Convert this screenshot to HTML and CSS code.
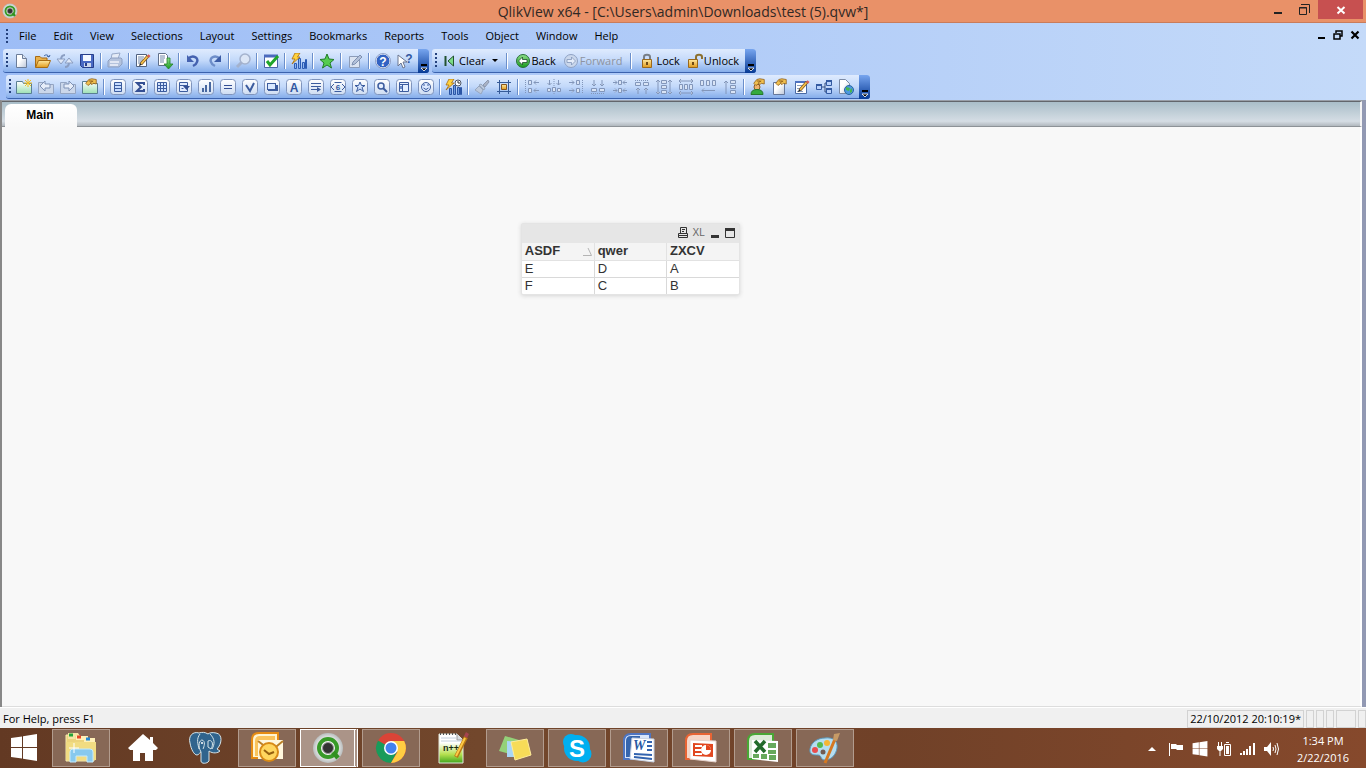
FILE: index.html
```html
<!DOCTYPE html>
<html lang="en">
<head>
<meta charset="utf-8">
<title>QlikView x64 - [C:\Users\admin\Downloads\test (5).qvw*]</title>
<link rel="stylesheet" href="styles.css">
</head>
<body>
<svg class="defs" aria-hidden="true">
  <defs>
    <linearGradient id="gFrame" x1="0" y1="0" x2="0" y2="1"><stop offset="0" stop-color="#fff"/><stop offset="1" stop-color="#cddcf2"/></linearGradient>
    <linearGradient id="gPage" x1="0" y1="0" x2="1" y2="1"><stop offset="0.4" stop-color="#fff"/><stop offset="1" stop-color="#bcc6d8"/></linearGradient>
    <linearGradient id="gGold" x1="0" y1="0" x2="0" y2="1"><stop offset="0" stop-color="#ffe9a0"/><stop offset="1" stop-color="#e09a1c"/></linearGradient>
    <linearGradient id="gGreen" x1="0" y1="0" x2="0" y2="1"><stop offset="0" stop-color="#8fe08a"/><stop offset="1" stop-color="#189a1c"/></linearGradient>
    <linearGradient id="gMint" x1="0" y1="0" x2="0" y2="1"><stop offset="0" stop-color="#fff"/><stop offset="1" stop-color="#9ce0b4"/></linearGradient>
    <linearGradient id="gNote" x1="0" y1="0" x2="0" y2="1"><stop offset="0.3" stop-color="#fff"/><stop offset="0.7" stop-color="#b6e050"/><stop offset="1" stop-color="#3fa51c"/></linearGradient>
    <radialGradient id="gSilver"><stop offset="0.5" stop-color="#fff"/><stop offset="1" stop-color="#b9bdbd"/></radialGradient>
    <symbol id="frame" viewBox="0 0 16 16"><rect x=".5" y=".5" width="15" height="15" rx="3" fill="url(#gFrame)" stroke="#7f94bd"/></symbol>
    <symbol id="hand" viewBox="0 0 16 16"><path d="M1 7 5 2l4-1 6 1v6l-4-1-2 2-1-2-4 3z" fill="#f0c050" stroke="#8b5a14"/><path d="M5 4h5M7 6l4-2" stroke="#7a4a10"/></symbol>
    <symbol id="pencil" viewBox="0 0 16 16"><path d="M6 11 13 3" stroke="#7b541c" stroke-width="3.200"/><path d="M6 11 12.500 3.500" stroke="#f6c14b" stroke-width="1.800"/><path d="m12 3 1.500-1.700 2 1.800-1.500 1.700z" fill="#d95c53"/><path d="m4 13 1-3 2 1.800z" fill="#222"/></symbol>
    <symbol id="bolt" viewBox="0 0 16 16"><path d="M4 0h5L6.500 4H9L1 11l3-5H1z" fill="#ffd23c" stroke="#a96d10" stroke-width=".8"/></symbol>
    <symbol id="qlik" viewBox="0 0 32 32"><circle cx="16" cy="16" r="15" fill="url(#gSilver)"/><circle cx="16" cy="16" r="9" fill="#f7f7f7" stroke="#389a28" stroke-width="4"/><path d="m21 20 5 6" stroke="#31901f" stroke-width="4.500"/><circle cx="16" cy="16" r="5.500" fill="#333" stroke="#999"/></symbol>
    <symbol id="win" viewBox="0 0 28 28"><path d="m1 4 11-1.600V13H1zm12-1.800L27 0v13H13zM1 14h11v10.600L1 23zm12 0h14v13l-14-2.200z" fill="#fff"/></symbol>
  </defs>
</svg>
<div class="window">
  <header class="titlebar">
    <svg class="app-icon" viewBox="0 0 32 32" aria-hidden="true"><use href="#qlik"/></svg>
    <h1 class="title">QlikView x64 - [C:\Users\admin\Downloads\test (5).qvw*]</h1>
    <div class="window-controls">
      <button class="wbtn" aria-label="Minimize"><svg viewBox="0 0 12 12"><path d="M2 9h8" stroke="#222" stroke-width="2"/></svg></button>
      <button class="wbtn" aria-label="Restore"><svg viewBox="0 0 12 12"><path d="M3 .5h8.500V9M1.500 3.500h7v7h-7zM1 4h8" fill="none" stroke="#222"/></svg></button>
      <button class="wbtn close" aria-label="Close"><svg viewBox="0 0 12 12"><path d="m2.500 3 7 6.500m0-6.500-7 6.500" stroke="#fff" stroke-width="2"/></svg></button>
    </div>
  </header>
  <div class="command-area">
    <nav class="menubar" aria-label="Main menu">
      <span class="grip"></span>
      <button>File</button><button>Edit</button><button>View</button><button>Selections</button><button>Layout</button><button>Settings</button><button>Bookmarks</button><button>Reports</button><button>Tools</button><button>Object</button><button>Window</button><button>Help</button>
      <div class="doc-controls">
        <button aria-label="Minimize document"><svg viewBox="0 0 10 10"><path d="M2 8h7" stroke="#000" stroke-width="2"/></svg></button>
        <button aria-label="Restore document"><svg viewBox="0 0 10 10"><path d="M3 3V1h6v5H7M1 4h6v5H1z" fill="none" stroke="#000" stroke-width="1.500"/></svg></button>
        <button aria-label="Close document"><svg viewBox="0 0 10 10"><path d="m1.500 1.500 7 7m0-7-7 7" stroke="#000" stroke-width="2.200"/></svg></button>
      </div>
    </nav>
    <div class="toolbar-row">
      <div class="toolbar" role="toolbar" aria-label="Standard">
        <span class="grip"></span>
        <button aria-label="New"><svg viewBox="0 0 16 16"><path d="M3.500 1.500h6l4 4v9h-10z" fill="url(#gPage)" stroke="#6c7d99"/><path d="M9.500 1.500v4h4" fill="#dde5f1" stroke="#6c7d99"/></svg></button>
        <button aria-label="Open"><svg viewBox="0 0 16 16"><path d="M.5 14V3.500H5L6.500 5H12v3" fill="#e8b04a" stroke="#a76b13"/><path d="m.5 14.500 3-7h12l-3 7z" fill="url(#gGold)" stroke="#a76b13"/><path d="M9 3c2-2 4-1 5 1l1-2m-1 2-2-1" fill="none" stroke="#365f9f"/></svg></button>
        <button aria-label="Reload" disabled><svg viewBox="0 0 16 16"><path d="M8 2C4 2 4 5 4 7m4 7c4 0 4-3 4-5" fill="none" stroke="#8b9ec2" stroke-width="2"/><path d="M0 6h8l-4 5zM16 10H8l4-5z" fill="#dfe8f7" stroke="#8b9ec2"/></svg></button>
        <button aria-label="Save"><svg viewBox="0 0 16 16"><path d="M1.500 1.500h13v13h-11l-2-2z" fill="#4969c3" stroke="#263d89"/><path d="M4 2h8v6H4z" fill="#f4f8ff"/><path d="M5 10h7v4H5z" fill="#ccd6eb"/><path d="M6 10h2v3H6z" fill="#263d89"/></svg></button>
        <span class="sep"></span>
        <button aria-label="Print" disabled><svg viewBox="0 0 16 16"><path d="m5 1 8-1-2 6H4z" fill="#e5ecf7" stroke="#98a9c8"/><path d="M1 8 4 5h10l1 1v5l-3 3H1z" fill="#b4c3dd" stroke="#8ea0c2"/><path d="M3 9h9M3 12h8" stroke="#f0f4fc" stroke-width="1.500"/></svg></button>
        <span class="sep"></span>
        <button aria-label="Edit script"><svg viewBox="0 0 16 16"><path d="M1.500 1.500h10v12h-10z" fill="#fff" stroke="#50617f"/><path d="M3 4h6M3 6h5M3 8h4M3 10h3" stroke="#7087a9"/><use href="#pencil"/></svg></button>
        <button aria-label="Reload script"><svg viewBox="0 0 16 16"><path d="M1.500.5h7l2 2v10h-9z" fill="#fff" stroke="#60708b"/><path d="M3 3h5M3 5h5M3 7h4M3 9h4" stroke="#7087a9"/><path d="M10 5h3v6h3l-4.500 5L7 11h3z" fill="url(#gGreen)" stroke="#23802a" stroke-width=".8"/></svg></button>
        <span class="sep"></span>
        <button aria-label="Undo"><svg viewBox="0 0 16 16"><path d="M3 6c5-5 11-1 9 3-.5 2-2 3-4 4" fill="none" stroke="#4562b0" stroke-width="2.500"/><path d="M2 2v7h7z" fill="#4562b0"/></svg></button>
        <button aria-label="Redo"><svg viewBox="0 0 16 16"><path d="M13 6C8 1 2 5 4 9c.5 2 2 3 4 4" fill="none" stroke="#6e8ec9" stroke-width="2.500"/><path d="M14 2v7H7z" fill="#3c5ca6"/></svg></button>
        <span class="sep"></span>
        <button aria-label="Search" disabled><svg viewBox="0 0 16 16"><path d="m7 9-5 5" stroke="#a4b2cd" stroke-width="3"/><circle cx="10" cy="6" r="5" fill="#dce6f6" stroke="#a4b2cd" stroke-width="1.500"/></svg></button>
        <span class="sep"></span>
        <button aria-label="Current selections"><svg viewBox="0 0 16 16"><path d="M1.500 2.500h13v12h-13z" fill="#fff" stroke="#4864a5"/><path d="M1 3h14" stroke="#4b6abe" stroke-width="3"/><path d="m4 8 3 4 8-9" fill="none" stroke="#20a52a" stroke-width="3"/></svg></button>
        <span class="sep"></span>
        <button aria-label="Quick chart wizard"><svg viewBox="0 0 16 16"><path d="M3.500 10.500h2v5h-2zm4-5h2v10h-2zm4 4h2v6h-2zm3-3h1v9h-1z" fill="#8eb6f0" stroke="#2b5bb5"/><use href="#bolt"/></svg></button>
        <span class="sep"></span>
        <button aria-label="Add bookmark"><svg viewBox="0 0 16 16"><path d="m8 1 2 5 5 .5-4 3.500 1.500 5L8 12l-4.500 3L5 10 1 6.500 6 6z" fill="#55cc50" stroke="#217d27"/></svg></button>
        <span class="sep"></span>
        <button aria-label="Edit notes" disabled><svg viewBox="0 0 16 16"><path d="M2.500 3.500h10v11h-10z" fill="#dae3f1" stroke="#8c9cb8"/><path d="m5 12 1-3 7-7 2 2-7 7z" fill="#b3c1d9" stroke="#7f91b2"/></svg></button>
        <span class="sep"></span>
        <button aria-label="Help topics"><svg viewBox="0 0 16 16"><circle cx="8" cy="8" r="7" fill="#3262c3" stroke="#fff"/><circle cx="8" cy="8" r="7.500" fill="none" stroke="#7184b0" stroke-width=".7"/><text x="8" y="12.500" text-anchor="middle" class="glyph white">?</text></svg></button>
        <button aria-label="Context help"><svg viewBox="0 0 16 16"><path d="M1 2v11l3-3 2 5 2-1-2-5h4z" fill="#fff" stroke="#6b7690"/><text x="12" y="10" text-anchor="middle" class="glyph blue">?</text></svg></button>
        <button class="cap" aria-label="Standard toolbar options"><svg viewBox="0 0 8 8"><path d="M1 1h6" stroke="#000" stroke-width="2"/><path d="M1 4h6L4 7z" fill="#000" stroke="#fff" stroke-width=".8"/></svg></button>
      </div>
      <div class="toolbar" role="toolbar" aria-label="Navigation">
        <span class="grip"></span>
        <button class="labeled"><svg viewBox="0 0 16 16"><path d="M3.500 3v10" stroke="#235230" stroke-width="2"/><path d="M11.500 3v10L6 8z" fill="#7bdc85" stroke="#235230"/></svg>Clear<span class="drop"></span></button>
        <span class="sep wide"></span>
        <button class="labeled"><svg viewBox="0 0 16 16"><circle cx="8" cy="8" r="6.500" fill="url(#gGreen)" stroke="#28703a"/><path d="m3.500 8 4-4v2.500H12v3H7.500V12z" fill="#fff" stroke="#1f4c2b" stroke-width=".8"/></svg>Back</button>
        <button class="labeled" disabled><svg viewBox="0 0 16 16"><circle cx="8" cy="8" r="6.500" fill="#cad7ec" stroke="#8fa2c4"/><path d="m12.500 8-4-4v2.500H4v3h4.500V12z" fill="#e5edfa" stroke="#8195b9" stroke-width=".8"/></svg>Forward</button>
        <span class="sep wide"></span>
        <button class="labeled"><svg viewBox="0 0 16 16"><path d="M5 7V4c0-3 6-3 6 0v3" fill="none" stroke="#777e87" stroke-width="2"/><path d="M3.500 6.500h9v8h-9z" fill="url(#gGold)" stroke="#9a691c"/><path d="M8 9v3" stroke="#704b14" stroke-width="2"/></svg>Lock</button>
        <button class="labeled"><svg viewBox="0 0 16 16"><path d="M9 7V4c0-3 6-3 6 0v2" fill="none" stroke="#8c702f" stroke-width="2"/><path d="M1.500 6.500h9v8h-9z" fill="url(#gGold)" stroke="#9a691c"/><path d="M6 9v3" stroke="#704b14" stroke-width="2"/></svg>Unlock</button>
        <button class="cap" aria-label="Navigation toolbar options"><svg viewBox="0 0 8 8"><path d="M1 1h6" stroke="#000" stroke-width="2"/><path d="M1 4h6L4 7z" fill="#000" stroke="#fff" stroke-width=".8"/></svg></button>
      </div>
    </div>
    <div class="toolbar-row second">
      <div class="toolbar" role="toolbar" aria-label="Design">
        <span class="grip"></span>
        <button aria-label="Add sheet"><svg viewBox="0 0 16 16"><path d="M.5 2.500h6l1 2h8v10H.5z" fill="url(#gMint)" stroke="#597f93"/><path d="M12 0v8M8 4h8M9 1l6 6m0-6L9 7" stroke="#f1bf21"/></svg></button>
        <button aria-label="Promote sheet" disabled><svg viewBox="0 0 16 16"><path d="M.5 3.500h6l1 2h8v9H.5z" fill="#cbd7ea" stroke="#94a5c2"/><path d="m2 7 5-5v3h5v4H7v3z" fill="#e6edf9" stroke="#7f92b6"/></svg></button>
        <button aria-label="Demote sheet" disabled><svg viewBox="0 0 16 16"><path d="M.5 3.500h6l1 2h8v9H.5z" fill="#cbd7ea" stroke="#94a5c2"/><path d="M14 7 9 2v3H4v4h5v3z" fill="#e6edf9" stroke="#7f92b6"/></svg></button>
        <button aria-label="Sheet properties"><svg viewBox="0 0 16 16"><path d="M.5 2.500h6l1 2h8v10H.5z" fill="url(#gMint)" stroke="#597f93"/><use href="#hand" x="2" y="-1" width="14" height="12"/></svg></button>
        <span class="sep"></span>
        <button aria-label="List box"><svg viewBox="0 0 16 16"><use href="#frame"/><path d="M4.500 3.500h7v9h-7zm0 3h7m-7 3h7" fill="#c6dcff" stroke="#3c5c9e"/></svg></button>
        <button aria-label="Statistics box"><svg viewBox="0 0 16 16"><use href="#frame"/><path d="M12 6V4H5l4 4-4 4h7v-2" fill="none" stroke="#344f93" stroke-width="2"/></svg></button>
        <button aria-label="Table box"><svg viewBox="0 0 16 16"><use href="#frame"/><path d="M3.500 3.500h9v9h-9zm3 0v9m3-9v9m-6-6h9m-9 3h9" fill="#d2e3ff" stroke="#3c5c9e"/></svg></button>
        <button aria-label="Multi box"><svg viewBox="0 0 16 16"><use href="#frame"/><path d="M3.500 3.500h8v9h-8zm0 3h8m-6 3h2" fill="#e2ecff" stroke="#3c5c9e"/><path d="M7 7h7l-3.500 4z" fill="#344f93"/></svg></button>
        <button aria-label="Chart"><svg viewBox="0 0 16 16"><use href="#frame"/><path d="M4 9h2v4H4zm3-3h2v7H7zm4-3h2v10h-2z" fill="#47679f"/></svg></button>
        <button aria-label="Input box"><svg viewBox="0 0 16 16"><use href="#frame"/><path d="M4 6.500h8m-8 3h8" stroke="#344f93"/></svg></button>
        <button aria-label="Current selections box"><svg viewBox="0 0 16 16"><use href="#frame"/><path d="m4 6 4 6 4-8" fill="none" stroke="#3c5c9e" stroke-width="2"/></svg></button>
        <button aria-label="Button object"><svg viewBox="0 0 16 16"><use href="#frame"/><path d="M4 11h9V6" fill="none" stroke="#3c5c9e" stroke-width="2"/><rect x="3.500" y="4.500" width="8" height="6" fill="#dae9ff" stroke="#3c5c9e"/></svg></button>
        <button aria-label="Text object"><svg viewBox="0 0 16 16"><use href="#frame"/><text x="8" y="12.500" text-anchor="middle" class="glyph blue">A</text></svg></button>
        <button aria-label="Line object"><svg viewBox="0 0 16 16"><use href="#frame"/><path d="M3 4.500h10M3 7.500h10M3 10.500h6" stroke="#3c5c9e"/><path d="m9 8 4 2.500L9 13z" fill="#3c5c9e"/></svg></button>
        <button aria-label="Slider object"><svg viewBox="0 0 16 16"><use href="#frame"/><path d="M4.500 3.500h7m-7 9h7M4 5 1 8l3 3m8-6 3 3-3 3" fill="none" stroke="#3c5c9e"/><text x="8" y="11" text-anchor="middle" class="tiny blue">6</text></svg></button>
        <button aria-label="Bookmark object"><svg viewBox="0 0 16 16"><use href="#frame"/><path d="m8 3 1.500 3.500H13l-3 2 1.500 4L8 10l-3.500 2.500 1.500-4-3-2h3.500z" fill="#d5e5ff" stroke="#3c5c9e"/></svg></button>
        <button aria-label="Search object"><svg viewBox="0 0 16 16"><use href="#frame"/><circle cx="7" cy="7" r="3" fill="#e5efff" stroke="#3c5c9e" stroke-width="1.500"/><path d="m9 9 4 4" stroke="#3c5c9e" stroke-width="2"/></svg></button>
        <button aria-label="Container"><svg viewBox="0 0 16 16"><use href="#frame"/><path d="M3.500 3.500h9v9h-9zM3 5.500h10M6.500 5v8" fill="#e4efff" stroke="#3c5c9e"/><path d="M4 7h2v3H4z" fill="#6f8fcb"/></svg></button>
        <button aria-label="Custom object"><svg viewBox="0 0 16 16"><use href="#frame"/><circle cx="8" cy="8" r="4.500" fill="#dce9ff" stroke="#3c5c9e"/><path d="M5.500 9q2.500 3 5 0M6 5v2m4-2v2" fill="none" stroke="#3c5c9e"/></svg></button>
        <span class="sep"></span>
        <button aria-label="Timed chart"><svg viewBox="0 0 16 16"><path d="M3.500 9.500h2v6h-2zm4-3h2v9h-2zm4 2h2v7h-2zm3 0h1v7h-1z" fill="#6f9bdd" stroke="#2b55a5"/><use href="#bolt" x="-1"/><circle cx="12" cy="4" r="3" fill="#fff" stroke="#4f5664"/><path d="M12 2v2h2" fill="none" stroke="#333"/></svg></button>
        <span class="sep"></span>
        <button aria-label="Format painter" disabled><svg viewBox="0 0 16 16"><path d="m9 6 5-5 1 2-4 5z" fill="#aab3c5" stroke="#8c98b0"/><path d="m7 5 4 4-1 2-5-5zM5 7l4 4-2 4-6-4z" fill="#bdc9dc" stroke="#97a7c0"/></svg></button>
        <button aria-label="Design grid"><svg viewBox="0 0 16 16"><path d="M3.500 1v14M12.500 1v14M1 3.500h14M1 12.500h14" stroke="#365b98"/><path d="M5.500 5.500h5v5h-5z" fill="url(#gGold)" stroke="#8a571b"/></svg></button>
        <span class="sep"></span>
        <button class="arrange" aria-label="Align left" disabled><svg viewBox="0 0 16 16"><path d="M1.500 1v14" stroke-dasharray="1 1"/><path d="M4.500 1.500h3v4h-3zm0 8h3v4h-3zM10 3.500h5m-5 8h5M12 1.500l-2 2 2 2m0 4-2 2 2 2"/></svg></button>
        <button class="arrange" aria-label="Center horizontally" disabled><svg viewBox="0 0 16 16"><path d="M8 0v16" stroke-dasharray="1 1"/><path d="M6.500 8.500h3v4h-3zM3.500 1v5m9-5v5M1.500 4l2 2 2-2m5 0 2 2 2-2M1.500 9.500h3v3h-3zm10 0h3v3h-3z"/></svg></button>
        <button class="arrange" aria-label="Align right" disabled><svg viewBox="0 0 16 16"><path d="M14.500 1v14" stroke-dasharray="1 1"/><path d="M8.500 1.500h3v4h-3zm0 8h3v4h-3zM1 3.500h5m-5 8h5M4 1.500l2 2-2 2m0 4 2 2-2 2"/></svg></button>
        <button class="arrange" aria-label="Align bottom" disabled><svg viewBox="0 0 16 16"><path d="M1 14.500h14" stroke-dasharray="1 1"/><path d="M1.500 9.500h5v3h-5zm8 0h5v3h-5zM4 1v6m8-6v6M2 5l2 2 2-2m4 0 2 2 2-2"/></svg></button>
        <button class="arrange" aria-label="Center vertically" disabled><svg viewBox="0 0 16 16"><path d="M6.500 1.500h3v4h-3zm0 8h3v4h-3zM1 3.500h4m6 0h4M1 11.500h4m6 0h4M3 1.500l2 2-2 2m10-4-2 2 2 2M3 9.500l2 2-2 2m10-4-2 2 2 2"/></svg></button>
        <button class="arrange" aria-label="Align top" disabled><svg viewBox="0 0 16 16"><path d="M1 1.500h14" stroke-dasharray="1 1"/><path d="M1.500 3.500h5v3h-5zm8 0h5v3h-5zM4 9v6m8-6v6M2 11l2-2 2 2m4 0 2-2 2 2"/></svg></button>
        <button class="arrange" aria-label="Space vertically" disabled><svg viewBox="0 0 16 16"><path d="M5.500 1.500h5v3h-5zm0 5h5v3h-5zm0 5h5v3h-5zM2 1v14M14 1v14M0 3l2-2 2 2M0 13l2 2 2-2m8-10 2-2 2 2m-4 10 2 2 2-2"/></svg></button>
        <button class="arrange" aria-label="Space horizontally" disabled><svg viewBox="0 0 16 16"><path d="M1.500 5.500h3v5h-3zm5 0h3v5h-3zm5 0h3v5h-3zM1 2h14M1 14h14M3 0 1 2l2 2m10-4 2 2-2 2M3 12l-2 2 2 2m10-4 2 2-2 2"/></svg></button>
        <button class="arrange" aria-label="Adjust left" disabled><svg viewBox="0 0 16 16"><path d="M.5 1.500h3v5h-3zm6 0h3v5h-3zm6 0h3v5h-3zM2 11.500h13M4 9.500l-2 2 2 2"/></svg></button>
        <button class="arrange" aria-label="Adjust top" disabled><svg viewBox="0 0 16 16"><path d="M8.500 1.500h5v3h-5zm0 5h5v3h-5zm0 5h5v3h-5zM4 2v13M2 4l2-2 2 2"/></svg></button>
        <span class="sep"></span>
        <button aria-label="User preferences"><svg viewBox="0 0 16 16"><circle cx="7" cy="8" r="3" fill="#eeb36e" stroke="#8b5a23"/><path d="M1 15.500q0-5 6-5t6 5z" fill="#35aa3e" stroke="#26772d"/><use href="#hand" x="2" y="-1" width="14" height="12"/></svg></button>
        <button aria-label="Document properties"><svg viewBox="0 0 16 16"><path d="M1.500 3.500h11v12h-11z" fill="url(#gPage)" stroke="#65779a"/><use href="#hand" x="2" y="-1" width="14" height="12"/></svg></button>
        <button aria-label="Edit module"><svg viewBox="0 0 16 16"><path d="M1.500 2.500h11v12h-11z" fill="#fff" stroke="#496aa5"/><path d="M1 3h12" stroke="#4e72c1" stroke-width="2"/><path d="M3 6.500h7M3 9.500h5M3 12.500h6" stroke="#8ba0c1"/><use href="#pencil"/></svg></button>
        <button aria-label="Table viewer"><svg viewBox="0 0 16 16"><path d="M6 8h3m0 0V4h2M9 8v5h2" fill="none" stroke="#344f7f"/><path d="M.5 5.500h5v5h-5zm10-4h5v5h-5zm0 8h5v5h-5z" fill="#b7d1fb" stroke="#345ba2"/><path d="M0 6h6m4-4h6m-6 8h6" stroke="#345ba2" stroke-width="2"/></svg></button>
        <button aria-label="Web view"><svg viewBox="0 0 16 16"><path d="M1.500.5h6l4 4v10h-10z" fill="url(#gPage)" stroke="#7b8aa5"/><circle cx="11" cy="11" r="4.500" fill="#4c98e0" stroke="#28669f"/><path d="m8 8 4 1-1 3-3-1zm4 3 2-2v4l-2 1z" fill="#49b54e"/></svg></button>
        <button class="cap" aria-label="Design toolbar options"><svg viewBox="0 0 8 8"><path d="M1 1h6" stroke="#000" stroke-width="2"/><path d="M1 4h6L4 7z" fill="#000" stroke="#fff" stroke-width=".8"/></svg></button>
      </div>
    </div>
  </div>
  <main class="document">
    <div class="tabs" role="tablist"><button class="tab" role="tab" aria-selected="true">Main</button></div>
    <div class="sheet">
      <section class="table-box" aria-label="Table box">
        <div class="caption">
          <button aria-label="Print table"><svg viewBox="0 0 10 11"><path d="M2.500 6.500v-6h6v6M.5 6.500h9v4h-9zM4 2.500h3M4 4.500h2M1 8.500h8" fill="none" stroke="#333"/></svg></button>
          <button class="xl" aria-label="Send to Excel">XL</button>
          <button aria-label="Minimize table"><svg viewBox="0 0 10 11"><path d="M1 9.500h8" stroke="#333" stroke-width="3"/></svg></button>
          <button aria-label="Maximize table"><svg viewBox="0 0 10 11"><path d="M.5 1.500h9v9h-9z" fill="none" stroke="#333"/><path d="M0 2.500h10" stroke="#333" stroke-width="3"/></svg></button>
        </div>
        <table>
          <thead><tr><th scope="col" aria-sort="ascending"><span class="sorted">ASDF<svg viewBox="0 0 9 9" aria-hidden="true"><path d="M0 8.500h8.500L5 1" fill="none" stroke="#b4b4b4"/></svg></span></th><th scope="col">qwer</th><th scope="col">ZXCV</th></tr></thead>
          <tbody><tr><td>E</td><td>D</td><td>A</td></tr><tr><td>F</td><td>C</td><td>B</td></tr></tbody>
        </table>
      </section>
    </div>
  </main>
  <footer class="statusbar"><span class="hint">For Help, press F1</span><span class="pane">22/10/2012 20:10:19*</span><i class="pane"></i><i class="pane"></i><i class="pane"></i><i class="pane broad"></i><i class="pane"></i></footer>
  <nav class="taskbar" aria-label="Taskbar">
    <button class="start" aria-label="Start"><svg viewBox="0 0 28 28"><use href="#win"/></svg></button>
    <button class="task open" aria-label="File Explorer"><svg viewBox="0 0 32 32"><path d="M1 3h10v4h18v22H1z" fill="#ecd37b" stroke="#f7e9ae"/><path d="M3 1h10l2 3h-5v3H3z" fill="#f5e5a5"/><path d="M4 3h4" stroke="#23a33a" stroke-width="3"/><path d="M11 4h12v4H11z" fill="#fff0b7"/><path d="M12 5h4" stroke="#e54727" stroke-width="3"/><path d="M19 6h11v4H19z" fill="#fff0b7"/><path d="M21 7h4" stroke="#278ad0" stroke-width="3"/><path d="M1 10h30v18H1z" fill="#f1dc82"/><path d="M5 30V20q0-3 3-3h17q3 0 3 3v10h-6v-6H11v6z" fill="#87c9ee" stroke="#c4eafd"/><path d="M9 11v10m-5-5h10" stroke="#fff"/></svg></button>
    <button class="task" aria-label="Home"><svg viewBox="0 0 32 32"><path d="M16 2 1 16l2 2h3v11h7v-8h5v8h8V18h3l2-2-5-5V5h-3v3z" fill="#fff"/></svg></button>
    <button class="task" aria-label="PostgreSQL"><svg viewBox="0 0 32 32"><path d="M10 1C4-1-1 4 1 11c1 6 4 12 7 12 2 0 3-3 4-3v9c0 3 6 3 8 0V19c4 3 9 2 11 0l-3-2c5-5 6-15-1-16-4-1-7 0-8 1-3-2-6-2-9-1z" fill="#30648d" stroke="#d6e4e8"/><path d="M11 2c-4 5-2 10-1 15m11-15c5 5 5 10 2 15M12 20c-4-7-1-12 1-12 4 1 2 7 1 9m5-8c4-2 6 3 3 8l-3-2z" fill="none" stroke="#d6e4e8"/><circle cx="13" cy="11" r="1" fill="#fff"/></svg></button>
    <button class="task open" aria-label="Outlook"><svg viewBox="0 0 32 32"><path d="M1 26V8q0-7 7-7h19v25z" fill="#fff4d1" stroke="#e68b12" stroke-width="2"/><path d="M4 24V9q0-5 5-5h15v5H10v15z" fill="#fbc45c"/><path d="M7 8h25v19H7z" fill="#fff7dd"/><path d="m7 9 13 10L32 9" fill="none" stroke="#bc8128" stroke-width="2"/><circle cx="18" cy="20" r="9" fill="#ffd65e" stroke="#d88a16" stroke-width="2"/><path d="m13 18 5 4 5-2" fill="none" stroke="#95600f" stroke-width="2"/></svg></button>
    <button class="task open active" aria-label="QlikView"><svg viewBox="0 0 32 32"><use href="#qlik"/></svg></button>
    <button class="task open" aria-label="Chrome"><svg viewBox="0 0 32 32"><circle cx="16" cy="16" r="15" fill="#db4437"/><path d="M16 16 3 8.500A15 15 0 0 0 16 31l6.500-12z" fill="#189b5b"/><path d="M16 9h13.200A15 15 0 0 1 16 31l6.500-11z" fill="#ffcd42"/><circle cx="16" cy="16" r="7" fill="#fff"/><circle cx="16" cy="16" r="5.500" fill="#4381ed"/></svg></button>
    <button class="task" aria-label="Notepad++"><svg viewBox="0 0 32 32"><path d="M2 2h18l6 6v23H2z" fill="url(#gNote)" stroke="#e3e8dc"/><path d="M20 2v6h6" fill="#d8dce0" stroke="#999"/><path d="M4 6h15M4 9h20" stroke="#c4d0dc"/><path d="M3 2h17" stroke="#555" stroke-width="2" stroke-dasharray="1 2"/><text x="6" y="19" class="npp">n++</text><path d="M19 25 29 5" stroke="#b97916" stroke-width="4"/><path d="M19 24 28 6" stroke="#ffca45" stroke-width="2"/><path d="m27 4 2-4 3 2-2 4z" fill="#a5444d"/></svg></button>
    <button class="task open" aria-label="Sticky Notes"><svg viewBox="0 0 32 32"><path d="m6 4 14 4-5 15L0 19z" fill="#94d179"/><path d="m8 9 14 1v15H8z" fill="#a9d6f6"/><path d="m12 10 16-3 4 16-16 5z" fill="#f7dc58" stroke="#ffec9b"/></svg></button>
    <button class="task open" aria-label="Skype"><svg viewBox="0 0 32 32"><circle cx="16" cy="16" r="13" fill="#00aff0"/><circle cx="10" cy="10" r="8" fill="#00aff0"/><circle cx="22" cy="22" r="8.500" fill="#00aff0"/><text x="16" y="24.500" text-anchor="middle" class="skype">S</text></svg></button>
    <button class="task open" aria-label="Word"><svg viewBox="0 0 32 32"><path d="M1 27V9q0-7 7-7h19v25z" fill="#d8e5fa" stroke="#4e75c1" stroke-width="2"/><path d="M3 25V9q0-5 5-5h9v21z" fill="#3565ad"/><path d="m9 6 22 1v23L7 27z" fill="#fff" stroke="#c9d3e3"/><text x="10" y="18" class="office word">W</text><path d="M24 10h5m-5 4h5m-5 4h5M11 22l18 1m-18 2 18 2" stroke="#3263af" stroke-width="2"/></svg></button>
    <button class="task open" aria-label="PowerPoint"><svg viewBox="0 0 32 32"><path d="M1 27V9q0-7 7-7h18v25z" fill="#f6d5c7" stroke="#e86434" stroke-width="2"/><path d="m5 8 26 1v21L5 27z" fill="#fff" stroke="#e6d2cb"/><path d="m8 11 20 1v13L8 24z" fill="#e14720"/><path d="M10 14h7m-7 4h6m-6 4h7" stroke="#fff" stroke-width="2"/><circle cx="21" cy="18" r="5" fill="#fff"/><path d="M21 18v-5a5 5 0 0 1 5 5z" fill="#e14720"/></svg></button>
    <button class="task open" aria-label="Excel"><svg viewBox="0 0 32 32"><path d="M1 27V9q0-7 7-7h18v25z" fill="#dcebd8" stroke="#49a735" stroke-width="2"/><path d="m5 8 26 1v21L5 27z" fill="#fff"/><path d="M21 11h8v5h-8zm0 7h8v4h-8zM6 22h6v4H6zm8 0h6v5h-6zm8 1h7v5h-7z" fill="#67a95c"/><path d="m8 9 10 11M18 9 8 20" stroke="#236b2b" stroke-width="3.500"/></svg></button>
    <button class="task open" aria-label="Paint"><svg viewBox="0 0 32 32"><path d="M16 6c8-1 13 3 12 10-1 7-6 12-12 12-5 0-3-5-7-5S0 23 1 17C2 11 8 6 16 6z" fill="#b5def1" stroke="#5a99bd"/><circle cx="6" cy="18" r="3" fill="#e94d4d"/><circle cx="11" cy="13" r="3" fill="#55b950"/><circle cx="18" cy="11" r="3" fill="#f6b634"/><circle cx="14" cy="20" r="2.500" fill="#725c52"/><path d="M16 31 26 7" stroke="#d57821" stroke-width="3"/><path d="m24 8 1-6 6-1-3 8z" fill="#c79b66"/></svg></button>
    <div class="tray">
      <button aria-label="Show hidden icons"><svg viewBox="0 0 16 16"><path d="m4 10 4-4 4 4z" fill="#fff"/></svg></button>
      <button aria-label="Action Center"><svg viewBox="0 0 16 16"><path d="M1.500 2v13" stroke="#fff"/><path d="M3 3h5l1 1h6v5H9L8 8H3z" fill="#fff"/></svg></button>
      <button aria-label="Windows update"><svg viewBox="0 0 28 28"><use href="#win"/></svg></button>
      <button aria-label="Battery"><svg viewBox="0 0 16 16"><path d="M2.500 1v4m3-4v4M4 9v6M8.500 3.500h6v11h-6zM10 1.500h3" fill="none" stroke="#fff"/><path d="M1 5h6v3L5 10H3L1 8zm9 0h3v8h-3z" fill="#fff"/></svg></button>
      <button aria-label="Network"><svg viewBox="0 0 16 16"><path d="M0 12h2v2H0zm3-2h2v4H3zm3-2h2v6H6zm3-3h2v9H9zm4-3h2v12h-2z" fill="#fff"/></svg></button>
      <button aria-label="Volume"><svg viewBox="0 0 16 16"><path d="M0 6h3l4-5v14l-4-5H0z" fill="#fff"/><path d="M9 6q1 2 0 4m2-6q2 4 0 8m2-10q3 6 0 12" fill="none" stroke="#fff"/></svg></button>
    </div>
    <div class="clock"><time>1:34 PM</time><time datetime="2016-02-22">2/22/2016</time></div>
  </nav>
</div>
</body>
</html>
```
FILE: styles.css
```css
* { box-sizing: border-box; }
html, body { height: 100%; margin: 0; }
body { font: 11px/16px "Open Sans", "Noto Sans", sans-serif; color: #000; overflow: hidden; }
button { font: inherit; color: inherit; background: none; border: 0; padding: 0; }
svg { display: block; overflow: visible; }
.defs { position: absolute; width: 0; height: 0; }
.window { display: flex; flex-direction: column; min-height: 100vh; background: #f0f0f0; }

.titlebar { display: grid; grid-template-columns: 1fr auto 1fr; height: 23px; background: #e99168; border-bottom: 1px solid #c97c5b; }
.app-icon { width: 16px; height: 16px; margin: 3px 2px; }
.title { margin: 0; font-size: 14px; line-height: 24px; font-weight: 400; color: #302824; white-space: nowrap; }
.window-controls { display: flex; justify-content: flex-end; align-items: flex-start; padding-right: 3px; }
.wbtn { width: 26px; height: 19px; display: grid; place-items: center; }
.wbtn svg { width: 12px; height: 12px; }
.wbtn.close { width: 45px; background: #c75050; margin-left: 1px; }

.command-area { background: linear-gradient(90deg, #9dbdf6, #c4daf9); height: 77px; }
.menubar { display: flex; align-items: center; height: 26px; padding-left: 3px; }
.menubar > button { padding: 0 8px 0 9px; height: 22px; }
.grip { width: 7px; height: 15px; flex: none; background: repeating-linear-gradient(#24417d 0 2px, transparent 2px 4px) 3px 0 / 2px 15px no-repeat; }
.doc-controls { display: flex; gap: 7px; margin-left: auto; padding-right: 6px; margin-bottom: 2px; }
.doc-controls svg { width: 10px; height: 10px; }

.toolbar-row { display: flex; gap: 3px; height: 26px; padding-left: 3px; align-items: flex-start; }
.toolbar-row.second { padding-left: 6px; }
.toolbar { display: flex; align-items: center; height: 24px; background: linear-gradient(#dfebfe, #c3d9fa 50%, #86aeeb); border-bottom: 1px solid #3b62ad; border-radius: 3px; }
.toolbar button { width: 22px; height: 22px; display: grid; place-items: center; flex: none; }
.toolbar svg { width: 16px; height: 16px; }
.toolbar .labeled { width: auto; display: flex; align-items: center; gap: 1px; padding: 0 4px 0 3px; }
.toolbar button:disabled { color: #8d93a0; }
.sep { width: 6px; height: 16px; flex: none; background: linear-gradient(90deg, #6b8fcb 50%, #fff 50%) 2px 0 / 2px 16px no-repeat; }
.sep.wide { width: 10px; background-position: 4px 0; }
.drop { border: 3px solid transparent; border-top-color: #000; border-bottom: 0; margin-left: 5px; }
.toolbar .cap { width: 11px; height: 24px; margin: 0 0 -1px 2px; place-items: end center; padding-bottom: 1px; background: linear-gradient(#77a5ef, #073a95); border-radius: 0 3px 3px 0; }
.toolbar .cap svg { width: 8px; height: 8px; }
.arrange svg { fill: #d9e4f5; stroke: #8296ba; }
.glyph { font: bold 12px "Liberation Sans", sans-serif; }
.tiny { font: bold 8px "Liberation Sans", sans-serif; }
.white { fill: #fff; }
.blue { fill: #3157a0; }

.document { flex: 1; display: flex; flex-direction: column; border-top: 1px solid #999fa8; border-left: 2px solid #888; border-right: 4px solid #9299b3; background: #f8f8f8; }
.tabs { height: 26px; border-top: 1px solid #62666c; border-bottom: 1px solid #8d9297; background: linear-gradient(#a9bec9, #d5dde4 80%, #b1b8be); padding: 2px 3px 0; border-right: 2px solid #f5f5f5; }
.tab { display: block; width: 72px; height: 24px; background: linear-gradient(#fff, #f8f8f8); border-radius: 6px 6px 0 0; font: bold 12px/22px "Liberation Sans", sans-serif; padding: 0 2px 2px 0; }
.sheet { flex: 1; display: flex; align-items: flex-start; padding: 96px 0 0 calc(38% + 2px); border-right: 2px solid #fff; border-bottom: 1px solid #ddd; }
.table-box { width: 219px; border: 1px solid #e4e4e4; border-radius: 2px; box-shadow: 0 1px 4px #d5d5d5; background: #fff; font: 13px/16px "Liberation Sans", sans-serif; color: #333; }
.caption { display: flex; justify-content: flex-end; align-items: center; gap: 5px; height: 19px; padding: 0 4px 2px; background: #e6e6e6; }
.caption svg { width: 10px; height: 11px; }
.caption .xl { font: 10px/16px "Liberation Sans", sans-serif; color: #666; }
table { width: 100%; border-collapse: collapse; table-layout: fixed; }
th, td { height: 17px; padding: 0 2px 0 3px; text-align: left; border: 1px solid #d9d9d9; line-height: 16px; }
td { font-weight: 400; }
th { background: #f4f4f4; border-color: #e2e2e2; }
tr > :first-child { border-left: 0; }
tr > :last-child { border-right: 0; }
thead th { border-top: 0; }
tbody tr:last-child td { border-bottom: 0; }
.sorted { display: flex; justify-content: space-between; align-items: center; }
.sorted svg { width: 9px; height: 9px; }

.statusbar { display: flex; align-items: center; gap: 2px; height: 21px; background: #f0f0f0; border-top: 1px solid #fff; padding: 1px 0 0 3px; }
.hint { margin-right: auto; }
.pane { min-width: 8px; height: 18px; border: 1px solid #d2d2d2; padding: 0 2px; }
.pane.broad { width: 20px; }

.taskbar { display: flex; height: 40px; gap: 4px; background: linear-gradient(90deg, #633923, #72472c 35%, #704128 65%, #86492c); color: #fff; }
.start { width: 48px; display: grid; place-items: center; }
.start svg { width: 28px; height: 28px; }
.task { width: 58px; margin: 1px 0; display: grid; place-items: center; border: 1px solid transparent; flex: none; }
.task svg { width: 32px; height: 32px; }
.task.open { background: #876856; border-color: #b29c8e; }
.task.active { background: #ab9488; border-color: #fff; border-right: 4px double #fff; }
.npp { font: bold 9px "Liberation Sans", sans-serif; fill: #172912; }
.skype { font: bold 24px "Liberation Sans", sans-serif; fill: #fff; }
.office { font: italic bold 14px "Liberation Serif", serif; }
.word { fill: #2858a2; }
.tray { display: flex; align-items: center; margin-left: auto; gap: 8px; padding-top: 2px; }
.tray svg { width: 16px; height: 16px; }
.clock { display: flex; flex-direction: column; justify-content: center; align-items: center; width: 82px; padding: 2px 4px 0 0; line-height: 17px; }
```
